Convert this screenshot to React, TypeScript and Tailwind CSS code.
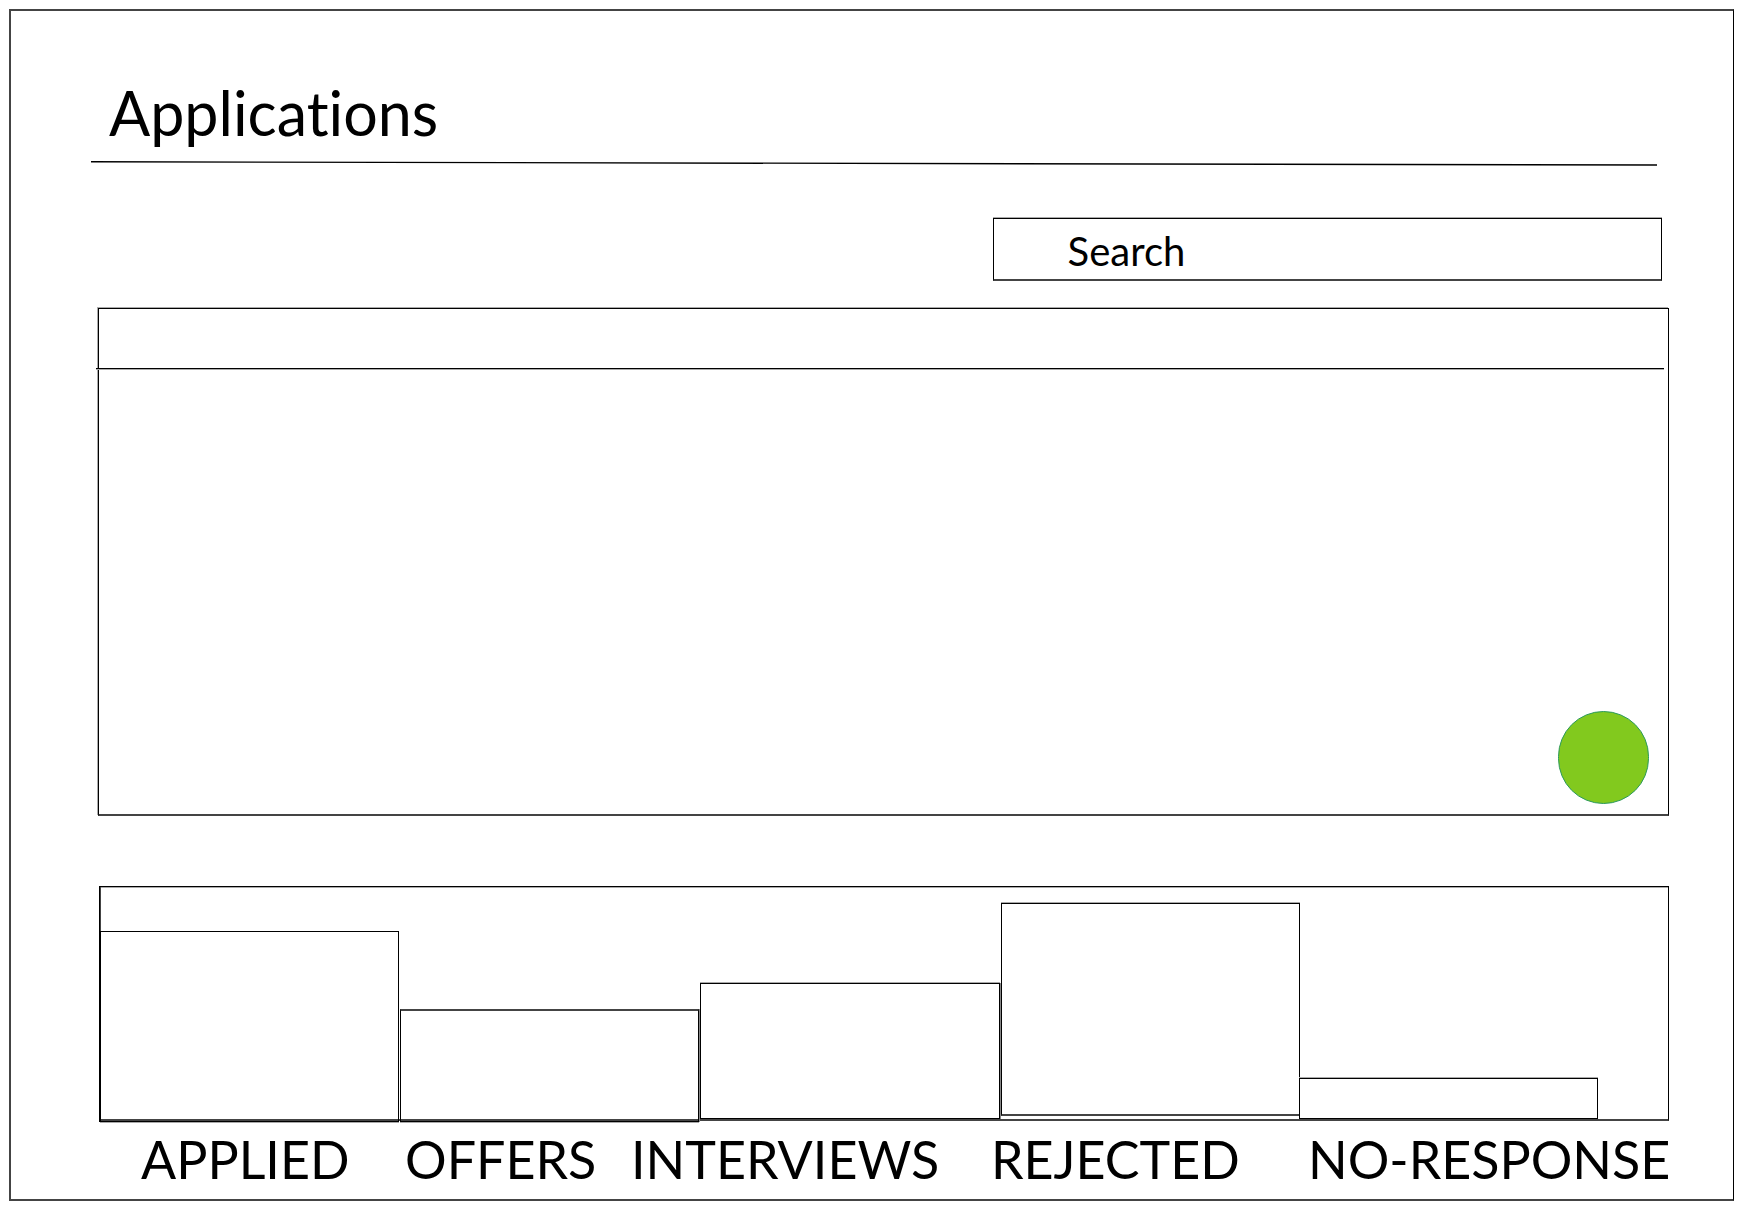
const bars = [
  { label: "APPLIED", box: "h-[191px] mr-px -mb-[3px] border border-black shadow-[-1px_0_0_#000,0_1px_0_#aaa]" },
  { label: "OFFERS", box: "h-[113px] mr-px -mb-[3px] border border-t-2 border-black border-t-[#444] shadow-[1px_0_0_#888,0_1px_0_#aaa]" },
  { label: "INTERVIEWS", box: "h-[136px] mr-px border border-black shadow-[0_-1px_0_#aaa,1px_0_0_#888]" },
  { label: "REJECTED", box: "h-[213px] -mr-px mb-[3px] border border-b-2 border-black border-b-[#444] shadow-[0_-1px_0_#aaa]" },
  { label: "NO-RESPONSE", box: "h-[41px] border border-black shadow-[0_-1px_0_#aaa]" },
];

function Header() {
  return (
    <header className="-ml-[7px] mr-[12px]">
      <h1 className="pb-[7px] pl-[18px] text-[61px] leading-[80px]">Applications</h1>
      <svg className="block h-[6px] w-full" viewBox="0 0 1566 6" preserveAspectRatio="none" aria-hidden="true">
        <path d="M0 1.8 L1566 5" stroke="#000" strokeWidth="1.4" fill="none" />
      </svg>
    </header>
  );
}

function SearchBox() {
  return (
    <div className="mr-[7px] mt-[52px] flex justify-end">
      <input
        type="search"
        aria-label="Search"
        placeholder="Search"
        className="h-[63px] w-[42.8%] border border-b-2 border-black border-b-[#444] bg-white pl-[74px] pt-[4px] text-[40px] leading-[48px] shadow-[0_-1px_0_#aaa] outline-none placeholder:text-black placeholder:opacity-100"
      />
    </div>
  );
}

function ApplicationsPanel() {
  return (
    <section
      aria-label="Applications list"
      className="relative mt-[27px] min-h-[300px] flex-1 border border-b-2 border-black border-b-[#444] shadow-[-1px_-1px_0_#aaa]"
    >
      <div className="-ml-[3px] mr-[4px] h-[60px] border-b border-black shadow-[0_1px_0_#aaa]" />
      <button
        type="button"
        aria-label="Add application"
        className="absolute bottom-[10px] right-[19px] h-[93px] w-[91px] rounded-full border border-[#2b9a5c] bg-[#82c91e]"
      />
    </section>
  );
}

function StatusChart() {
  return (
    <section aria-label="Applications by status">
      <div className="ml-px mt-[70px] grid h-[235px] grid-cols-[300fr_300fr_300fr_298fr_299fr_70fr] items-end border border-b-2 border-black border-b-[#444] shadow-[inset_1px_0_0_#444,inset_0_1px_0_#aaa]">
        {bars.map((bar) => (
          <div key={bar.label} className={bar.box} />
        ))}
      </div>
      <div className="ml-[43px] mt-[6px] grid grid-cols-[264fr_226fr_360fr_317fr_361fr] whitespace-nowrap text-[52px] leading-[64px]">
        {bars.map((bar) => (
          <span key={bar.label} className="min-w-0">
            {bar.label}
          </span>
        ))}
      </div>
    </section>
  );
}

export default function App() {
  return (
    <div className="flex min-h-screen flex-col bg-white p-[9px] font-['Virgil','Lato',sans-serif] text-black [font-variant-ligatures:none]">
      <main className="flex flex-1 flex-col border-2 border-r border-[#444] border-r-black pb-[8px] pl-[87px] pr-[64px] pt-[62px]">
        <Header />
        <SearchBox />
        <ApplicationsPanel />
        <StatusChart />
      </main>
    </div>
  );
}
